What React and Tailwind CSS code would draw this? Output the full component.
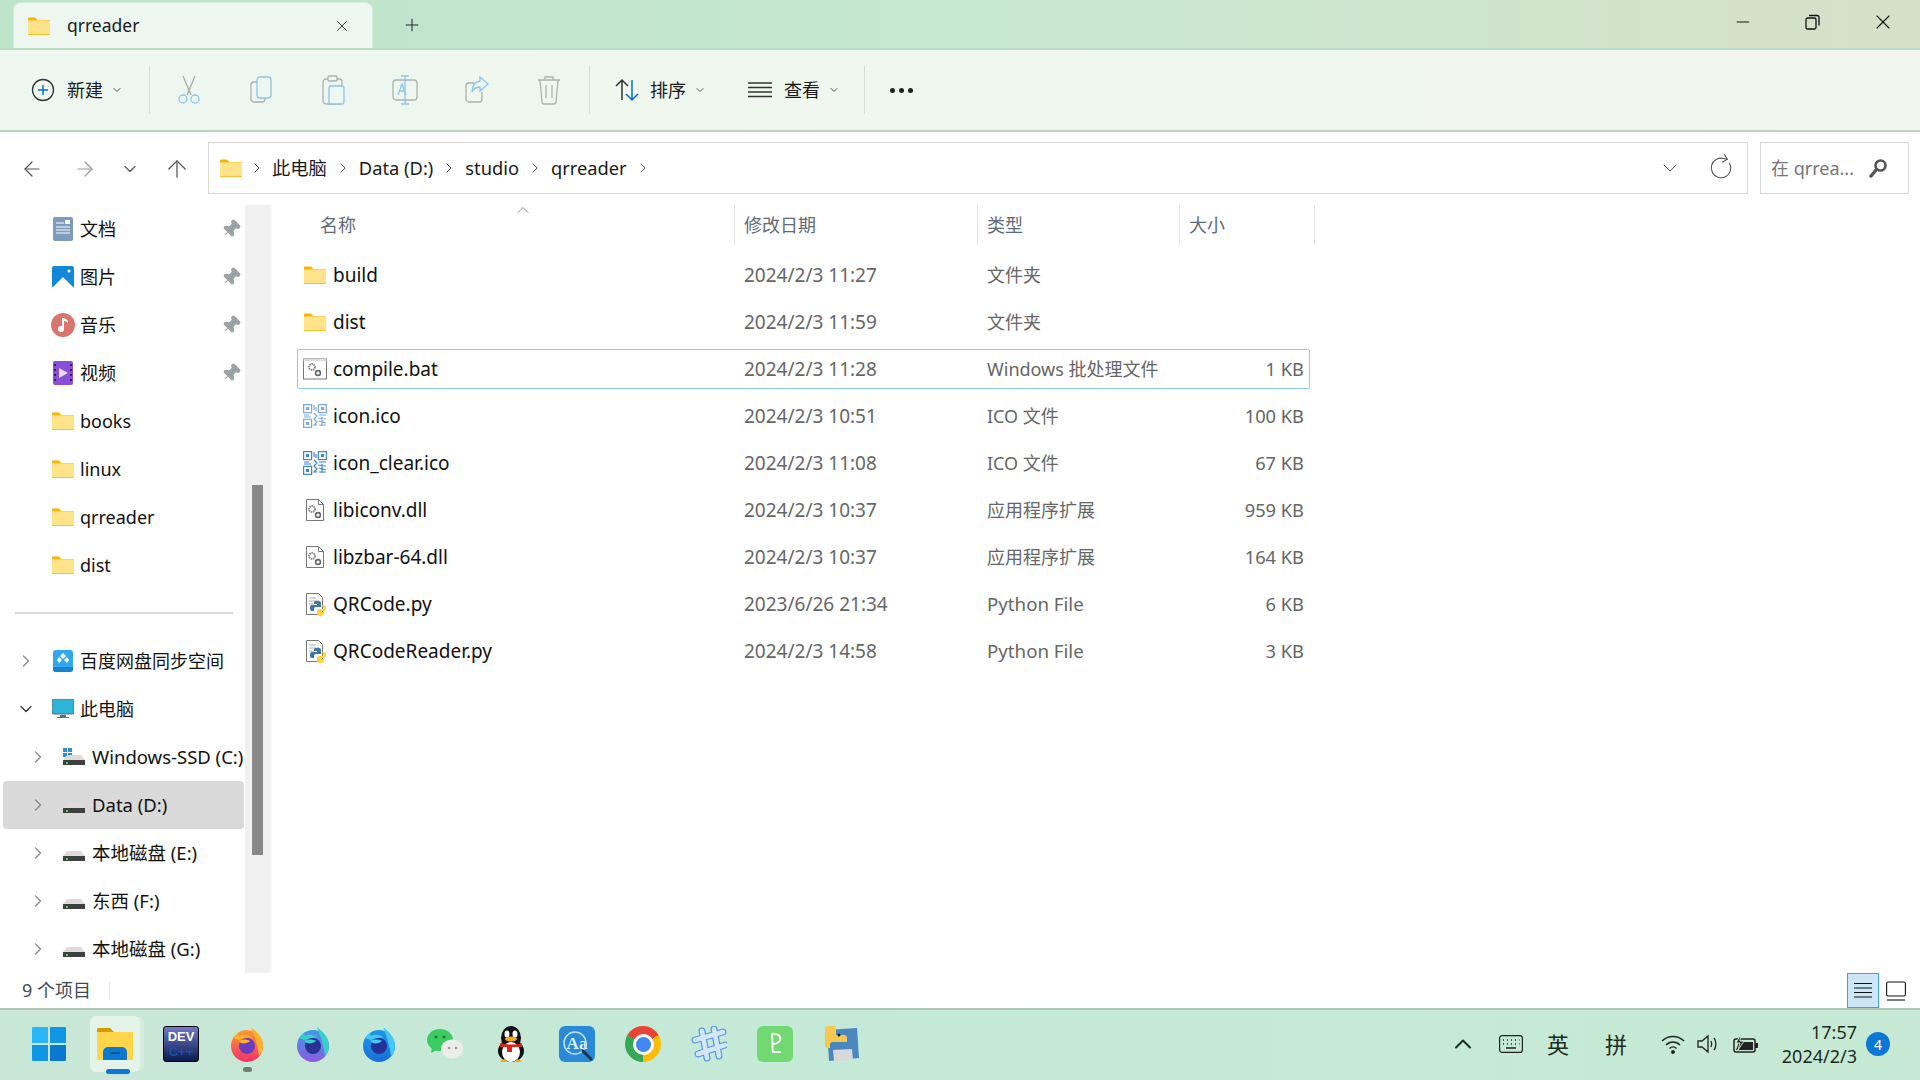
import React from 'react';
import { Plus, X, Minus, ChevronDown, ChevronRight, ChevronUp, ArrowLeft, ArrowRight, ArrowUp, RotateCw, Pin } from 'lucide-react';

const Folder = ({ className = 'w-[22px] h-[18px]' }) => (
  <svg viewBox="0 0 22 18" className={className}>
    <path d="M0 1.5a1 1 0 0 1 1-1h6l2.5 2.5H0z" fill="#f7b500" />
    <path d="M0 3h22v15H0z" fill="#fbc02d" />
    <path d="M0 3.5h22v13.5H0z" fill="#ffe38a" />
  </svg>
);

const Gears = ({ x = 0, y = 0 }) => (
  <g transform={`translate(${x} ${y})`}>
    <circle cx="4" cy="4" r="3" fill="none" stroke="#8e8e8e" strokeWidth="2" strokeDasharray="1.6 .6" />
    <circle cx="10" cy="10" r="2.4" fill="none" stroke="#666" strokeWidth="1.6" />
  </g>
);

const BatIcon = () => (
  <svg viewBox="0 0 24 22" className="w-6 h-[22px]">
    <rect x=".5" y="1" width="23" height="20" fill="#fff" stroke="#777" />
    <path d="M.5 1h23v2H.5z" fill="#ddd" />
    <Gears x="5" y="5" />
  </svg>
);

const DllIcon = () => (
  <svg viewBox="0 0 24 24" className="w-6 h-6">
    <path d="M3.5 1.500h12l5 5v16h-17z" fill="#fff" stroke="#777" />
    <path d="M15.500 1.500v5h5" fill="none" stroke="#777" />
    <Gears x="5" y="7" />
  </svg>
);

const PyBadge = () => (
  <svg viewBox="0 0 24 24" className="w-6 h-6">
    <path d="M3.500 1.500h12l4 4v17h-16z" fill="#fff" stroke="#777" />
    <path d="M6 6h7M6 9h10M6 12h5" stroke="#aaa" />
    <path d="M12 9h4a2 2 0 0 1 2 2v4h-5a2 2 0 0 0-2 2v2H9a2 2 0 0 1-2-2v-2a2 2 0 0 1 2-2h5v-1h-3v-1a2 2 0 0 1 1-2z" fill="#3d75a8" />
    <path d="M19 13h2a2 2 0 0 1 2 2v2a2 2 0 0 1-2 2h-3v1h3v1a3 3 0 0 1-3 3h-2a2 2 0 0 1-2-2v-3a2 2 0 0 1 2-2h4a1 1 0 0 0 1-1z" fill="#ffd43b" />
  </svg>
);

const QrIcon = ({ faded }) => (
  <svg viewBox="0 0 24 24" className="w-6 h-6" fill="none" stroke={faded ? '#7fa9d8' : '#3f86cc'} strokeWidth="1.200">
    <rect x=".6" y=".6" width="8" height="8" />
    <rect x="15.400" y=".6" width="8" height="8" />
    <rect x=".6" y="15.400" width="8" height="8" />
    <path d="M3.500 3.500h2v2h-2zM18.500 3.500h2v2h-2zM3.500 18.500h2v2h-2z" fill={faded ? '#7fa9d8' : '#3f86cc'} />
    <path d="M11 1v5M13 3v4M1 11h5M1 13h7M11 9l3 3-3 3 3 3-3 3h3M16 11h7M15 14l8 1M16 17l7 2M16 21h7M19 13v9" />
  </svg>
);

const ToolCut = () => (
  <svg viewBox="0 0 24 30" className="w-6 h-[30px]" fill="none" strokeWidth="1.300">
    <path d="M6 1l8 19M18 1L10 20" stroke="#a8a8a8" />
    <circle cx="6" cy="24" r="4" stroke="#8cc6ea" />
    <circle cx="18" cy="24" r="4" stroke="#8cc6ea" />
  </svg>
);
const ToolCopy = () => (
  <svg viewBox="0 0 24 30" className="w-6 h-[30px]" fill="none" strokeWidth="1.300">
    <rect x="2" y="7" width="14" height="20" rx="3" stroke="#b0b0b0" />
    <rect x="8" y="2" width="14" height="21" rx="3" fill="#edf7ef" stroke="#8cc6ea" />
  </svg>
);
const ToolPaste = () => (
  <svg viewBox="0 0 24 30" className="w-6 h-[30px]" fill="none" strokeWidth="1.300">
    <rect x="2" y="4" width="19" height="25" rx="3" stroke="#b0b0b0" />
    <rect x="7" y="1" width="9" height="5" rx="1" fill="#edf7ef" stroke="#b0b0b0" />
    <rect x="8" y="11" width="15" height="18" rx="2" fill="#edf7ef" stroke="#8cc6ea" />
  </svg>
);
const ToolRename = () => (
  <svg viewBox="0 0 26 30" className="w-[26px] h-[30px]" fill="none" strokeWidth="1.300">
    <rect x="1" y="5" width="24" height="20" rx="3" stroke="#b0b0b0" />
    <path d="M13 1v28M9 1h8M9 29h8" stroke="#8cc6ea" fill="#edf7ef" />
    <path d="M6 20l4-11 4 11M7.500 16h5" stroke="#8cc6ea" />
  </svg>
);
const ToolShare = () => (
  <svg viewBox="0 0 24 30" className="w-6 h-[30px]" fill="none" strokeWidth="1.300">
    <path d="M17 17v7a3 3 0 0 1-3 3H4a3 3 0 0 1-3-3V11a3 3 0 0 1 3-3h5" stroke="#b0b0b0" />
    <path d="M15 2l8 7-8 7v-4c-4 0-6 1-8 5 0-7 3-10 8-11z" fill="#edf7ef" stroke="#8cc6ea" />
  </svg>
);
const ToolTrash = () => (
  <svg viewBox="0 0 24 30" className="w-6 h-[30px]" fill="none" strokeWidth="1.300" stroke="#b0b0b0">
    <path d="M1 5h22M8 5V2h8v3M3 5l2 22a2 2 0 0 0 2 2h10a2 2 0 0 0 2-2l2-22M9 10v13M15 10v13" />
  </svg>
);

const DriveIcon = ({ win }) => (
  <svg viewBox="0 0 22 18" className="w-[22px] h-[18px]">
    {win && <path d="M0 0h4v4H0zM5 0h4v4H5zM0 5h4v4H0zM5 5h4v4H5z" fill="#2a8fe0" />}
    <path d="M4 7h14l4 5H0z" fill="#dcdcdc" />
    <path d="M0 12h22v5H0z" fill="#3f3f3f" />
    <path d="M3 14h2v2H3z" fill="#3ddc4b" />
  </svg>
);

const NavDocs = () => (
  <svg viewBox="0 0 20 24" className="w-[20px] h-6">
    <rect width="20" height="24" rx="2" fill="#7d9cbd" />
    <path d="M3 6h8M3 10h14M3 13h14M3 16h14" stroke="#fff" strokeWidth="1.200" />
    <path d="M12 3h5v4h-5z" fill="#fff" />
  </svg>
);
const NavPics = () => (
  <svg viewBox="0 0 22 22" className="w-[22px] h-[22px]">
    <rect width="22" height="22" rx="2" fill="#1488d8" />
    <path d="M0 22l11-11 11 11z" fill="#fff" />
    <circle cx="17" cy="5" r="1.500" fill="#fff" />
  </svg>
);
const NavMusic = () => (
  <svg viewBox="0 0 24 24" className="w-6 h-6">
    <circle cx="12" cy="12" r="12" fill="#d9756f" />
    <path d="M12 5v11" stroke="#fff" strokeWidth="2" />
    <circle cx="10" cy="16" r="3" fill="#fff" />
    <path d="M12 5c2 1 4 1 5 3v2c-2-2-3-2-5-2z" fill="#fff" />
  </svg>
);
const NavVideo = () => (
  <svg viewBox="0 0 20 24" className="w-[20px] h-6">
    <rect width="20" height="24" rx="2" fill="#8a4fd6" />
    <path d="M1 3h2v2H1zM1 8h2v2H1zM1 13h2v2H1zM1 18h2v2H1zM17 3h2v2h-2zM17 8h2v2h-2zM17 13h2v2h-2zM17 18h2v2h-2z" fill="#3a1d6e" />
    <path d="M6 7l9 5-9 5z" fill="#e9def9" />
  </svg>
);
const NavBaidu = () => (
  <svg viewBox="0 0 20 22" className="w-[20px] h-[22px]">
    <rect width="20" height="22" rx="3" fill="#2fa8ee" />
    <path d="M10 3l3 3-3 3-3-3zM6 7l3 3-3 3-2-3zM14 7l2 3-2 3-3-3z" fill="#fff" />
    <path d="M0 17h20v2a3 3 0 0 1-3 3H3a3 3 0 0 1-3-3z" fill="#1682d0" />
  </svg>
);
const NavPc = () => (
  <svg viewBox="0 0 22 20" className="w-[22px] h-5">
    <rect width="22" height="15" rx="1.500" fill="#2cb5d9" stroke="#55707d" />
    <path d="M8 16h6v2h3v1H5v-1h3z" fill="#55707d" />
  </svg>
);

const quick = [
  { icon: <NavDocs />, label: '文档', pin: true },
  { icon: <NavPics />, label: '图片', pin: true },
  { icon: <NavMusic />, label: '音乐', pin: true },
  { icon: <NavVideo />, label: '视频', pin: true },
  { icon: <Folder />, label: 'books' },
  { icon: <Folder />, label: 'linux' },
  { icon: <Folder />, label: 'qrreader' },
  { icon: <Folder />, label: 'dist' },
];

const drives = [
  { label: 'Windows-SSD (C:)', win: true },
  { label: 'Data (D:)', active: true },
  { label: '本地磁盘 (E:)' },
  { label: '东西 (F:)' },
  { label: '本地磁盘 (G:)' },
];

const files = [
  { icon: <Folder />, name: 'build', date: '2024/2/3 11:27', type: '文件夹', size: '' },
  { icon: <Folder />, name: 'dist', date: '2024/2/3 11:59', type: '文件夹', size: '' },
  { icon: <BatIcon />, name: 'compile.bat', date: '2024/2/3 11:28', type: 'Windows 批处理文件', size: '1 KB', selected: true },
  { icon: <QrIcon faded />, name: 'icon.ico', date: '2024/2/3 10:51', type: 'ICO 文件', size: '100 KB' },
  { icon: <QrIcon />, name: 'icon_clear.ico', date: '2024/2/3 11:08', type: 'ICO 文件', size: '67 KB' },
  { icon: <DllIcon />, name: 'libiconv.dll', date: '2024/2/3 10:37', type: '应用程序扩展', size: '959 KB' },
  { icon: <DllIcon />, name: 'libzbar-64.dll', date: '2024/2/3 10:37', type: '应用程序扩展', size: '164 KB' },
  { icon: <PyBadge />, name: 'QRCode.py', date: '2023/6/26 21:34', type: 'Python File', size: '6 KB' },
  { icon: <PyBadge />, name: 'QRCodeReader.py', date: '2024/2/3 14:58', type: 'Python File', size: '3 KB' },
];

const Crumb = ({ label }) => (
  <>
    <span className="whitespace-nowrap text-[18.3px]">{label}</span>
    <ChevronRight className="w-4 h-4 mx-[8px] text-[#555]" strokeWidth={1.5} />
  </>
);

const ToolButton = ({ children }) => (
  <div className="w-[72px] flex items-center justify-center">{children}</div>
);

const TitleBar = () => (
  <div className="h-12 shrink-0 flex bg-gradient-to-r from-[#bde3c9] via-[#c6e8d0] to-[#d6e0c9]">
    <div className="ml-[13px] mt-[2px] w-[360px] h-[46px] bg-[#edf7ef] rounded-t-lg border border-b-0 border-[#d4ecdb] flex items-center pl-[14px] pr-[21px] gap-[17px]">
      <Folder />
      <span className="flex-1 text-[17.5px]">qrreader</span>
      <X className="w-[18px] h-[18px] text-[#222]" strokeWidth={1.2} />
    </div>
    <div className="w-[78px] flex items-center justify-center pt-[2px]">
      <Plus className="w-5 h-5 text-[#222]" strokeWidth={1.2} />
    </div>
    <div className="ml-auto flex items-start pt-[10px] pr-[2px]">
      <div className="w-[70px] flex justify-center"><Minus className="w-5 h-6 text-[#111]" strokeWidth={1.2} /></div>
      <div className="w-[70px] flex justify-center h-6 items-center">
        <svg viewBox="0 0 16 16" className="w-4 h-4" fill="none" stroke="#111" strokeWidth="1.300">
          <rect x="1" y="4" width="10" height="11" rx="1.500" />
          <path d="M4 1.500h8a2 2 0 0 1 2 2v8" />
        </svg>
      </div>
      <div className="w-[70px] flex justify-center h-6 items-center"><X className="w-6 h-6 text-[#111]" strokeWidth={1.1} /></div>
    </div>
  </div>
);

const Toolbar = () => (
  <div className="h-[84px] shrink-0 flex items-center bg-gradient-to-r from-[#edf7ef] to-[#f1f6ee] border-t-2 border-b-2 border-t-[#bcdcc5] border-b-[#b9d6bf] pl-[31px]">
    <div className="flex items-center w-[118px] shrink-0">
      <svg viewBox="0 0 24 24" className="w-6 h-6 mr-3" fill="none">
        <circle cx="12" cy="12" r="10.500" stroke="#333" strokeWidth="1.300" />
        <path d="M12 7v10M7 12h10" stroke="#0a6fd0" strokeWidth="1.500" />
      </svg>
      <span>新建</span>
      <ChevronDown className="w-3 h-3 ml-2 text-[#555]" />
    </div>
    <div className="w-px h-12 bg-[#d3ddd5]" />
    <div className="flex pl-[3px]">
      <ToolButton><ToolCut /></ToolButton>
      <ToolButton><ToolCopy /></ToolButton>
      <ToolButton><ToolPaste /></ToolButton>
      <ToolButton><ToolRename /></ToolButton>
      <ToolButton><ToolShare /></ToolButton>
      <ToolButton><ToolTrash /></ToolButton>
    </div>
    <div className="ml-[4px] w-px h-12 bg-[#d3ddd5]" />
    <div className="flex items-center ml-6 w-[134px]">
      <svg viewBox="0 0 26 24" className="w-[26px] h-6 mr-[10px]" fill="none" strokeWidth="1.500">
        <path d="M8 22V2M2 8l6-6 6 6" stroke="#333" />
        <path d="M18 2v20M12 16l6 6 6-6" stroke="#0a6fd0" />
      </svg>
      <span>排序</span>
      <ChevronDown className="w-3 h-3 ml-2 text-[#555]" />
    </div>
    <div className="flex items-center w-[116px]">
      <svg viewBox="0 0 24 20" className="w-6 h-5 mr-3" fill="none" stroke="#333" strokeWidth="1.300">
        <path d="M0 3h24M0 7.500h24M0 12h24M0 16.500h24" />
      </svg>
      <span>查看</span>
      <ChevronDown className="w-3 h-3 ml-2 text-[#555]" />
    </div>
    <div className="w-px h-12 bg-[#d3ddd5]" />
    <div className="ml-[25px] flex gap-1">
      <div className="w-[5px] h-[5px] rounded-full bg-[#222]" />
      <div className="w-[5px] h-[5px] rounded-full bg-[#222]" />
      <div className="w-[5px] h-[5px] rounded-full bg-[#222]" />
    </div>
  </div>
);

const NavBar = () => (
  <div className="h-[73px] shrink-0 flex items-center bg-white">
    <div className="w-[208px] shrink-0 flex items-center text-[#555]">
      <div className="w-[64px] flex justify-center"><ArrowLeft className="w-6 h-6" strokeWidth={1.2} /></div>
      <div className="w-[42px] flex justify-center"><ArrowRight className="w-6 h-6 text-[#9a9a9a]" strokeWidth={1.2} /></div>
      <div className="w-[48px] flex justify-center"><ChevronDown className="w-5 h-5" strokeWidth={1.4} /></div>
      <div className="w-[46px] flex justify-center"><ArrowUp className="w-7 h-7" strokeWidth={1.1} /></div>
    </div>
    <div className="w-[1540px] h-[52px] -mt-[1px] border border-[#d8d8d8] flex items-center pl-[11px] text-[#1a1a1a]">
      <Folder />
      <ChevronRight className="w-4 h-4 mx-[7px] text-[#555]" strokeWidth={1.5} />
      <Crumb label="此电脑" />
      <Crumb label="Data (D:)" />
      <Crumb label="studio" />
      <Crumb label="qrreader" />
      <div className="ml-auto flex items-center text-[#555] pr-[13px]">
        <ChevronDown className="w-6 h-6" strokeWidth={1} />
        <RotateCw className="ml-[26px] w-[26px] h-[26px] -rotate-[30deg]" strokeWidth={1} />
      </div>
    </div>
    <div className="ml-3 w-[149px] h-[52px] -mt-[1px] border border-[#d8d8d8] flex items-center pl-[10px] text-[#777]">
      <span className="flex-1">在 qrrea...</span>
      <svg viewBox="0 0 20 20" className="w-5 h-5 mr-[20px]" fill="none" stroke="#555">
        <circle cx="12.500" cy="7.500" r="5" strokeWidth="2.600" />
        <path d="M8.500 11.500L3 18" strokeWidth="3.400" strokeLinecap="round" />
      </svg>
    </div>
  </div>
);

const Sidebar = () => (
  <div className="w-[272px] shrink-0 flex border-r-2 border-[#f7f7f7] overflow-hidden">
    <div className="w-[245px] shrink-0 text-[#111]">
      {quick.map((item) => (
        <div key={item.label} className="h-12 flex items-center">
          <div className="w-[80px] shrink-0 pl-[51px] pr-[5px] flex justify-center">{item.icon}</div>
          <span className="flex-1">{item.label}</span>
          {item.pin && <Pin className="w-5 h-5 mr-[4px] text-[#9aa2a8] rotate-45" fill="#9aa2a8" strokeWidth={1.4} />}
        </div>
      ))}
      <div className="ml-[15px] w-[218px] h-[2px] mt-[23px] mb-[23px] bg-[#d8d8d8]" />
      <div className="h-12 flex items-center">
        <ChevronRight className="w-5 h-5 ml-[16px] text-[#888]" strokeWidth={1.5} />
        <div className="w-[44px] pl-[9px] flex justify-center"><NavBaidu /></div>
        <span className="whitespace-nowrap">百度网盘同步空间</span>
      </div>
      <div className="h-12 flex items-center">
        <ChevronDown className="w-5 h-5 ml-[16px] text-[#333]" strokeWidth={1.5} />
        <div className="w-[44px] pl-[9px] flex justify-center"><NavPc /></div>
        <span>此电脑</span>
      </div>
      {drives.map((d) => (
        <div key={d.label} className={d.active ? 'h-12 ml-[3px] mr-px rounded flex items-center bg-[#d9d9d9]' : 'h-12 ml-[3px] mr-px flex items-center'}>
          <ChevronRight className="w-5 h-5 ml-[25px] text-[#888]" strokeWidth={1.5} />
          <div className="w-[44px] pl-[8px] flex justify-center"><DriveIcon win={d.win} /></div>
          <span className="whitespace-nowrap text-[18.5px]">{d.label}</span>
        </div>
      ))}
    </div>
    <div className="w-[25px] shrink-0 bg-[#f0f0f0] flex justify-center">
      <div className="w-[11px] h-[370px] mt-[280px] bg-[#888]" />
    </div>
  </div>
);

const HeaderCell = ({ children, className }) => (
  <div className={`h-10 flex items-center border-r border-[#e5e5e5] text-[#5f6b76] ${className}`}>{children}</div>
);

const FileTable = () => (
  <div className="flex-1 pl-[25px] overflow-hidden">
    <div className="flex w-[1018px]">
      <HeaderCell className="relative w-[438px] pl-[23px]">
        名称
        <ChevronUp className="absolute left-[216px] -top-[5px] w-5 h-5 text-[#777]" strokeWidth={1} />
      </HeaderCell>
      <HeaderCell className="w-[243px] pl-[9px]">修改日期</HeaderCell>
      <HeaderCell className="w-[202px] pl-[9px]">类型</HeaderCell>
      <HeaderCell className="w-[135px] pl-[9px]">大小</HeaderCell>
    </div>
    <div className="mt-[10px] flex flex-col gap-[7px] w-[1013px]">
      {files.map((f) => (
        <div
          key={f.name}
          className={f.selected
            ? 'h-10 grid grid-cols-[446px_243px_1fr_auto] items-center border border-[#90c8f5] rounded-[2px] pr-[5px] text-[#666]'
            : 'h-10 grid grid-cols-[446px_243px_1fr_auto] items-center border border-transparent pr-[5px] text-[#666]'}
        >
          <div className="flex items-center pl-[5px] text-[#111]">
            <div className="w-6 mr-[6px] flex justify-center">{f.icon}</div>
            <span className="whitespace-nowrap text-[19px]">{f.name}</span>
          </div>
          <span className="whitespace-nowrap text-[19px]">{f.date}</span>
          <span className={f.type === 'Python File' ? 'whitespace-nowrap text-[18.7px]' : 'whitespace-nowrap'}>{f.type}</span>
          <span className="whitespace-nowrap text-[18.3px]">{f.size}</span>
        </div>
      ))}
    </div>
  </div>
);

const StatusBar = () => (
  <div className="h-[35px] shrink-0 bg-white flex items-center pl-[22px] text-[#3f4a55]">
    <span className="w-[87px]">9 个项目</span>
    <div className="w-px h-[18px] bg-[#e8e8e8]" />
    <div className="ml-auto flex items-center pr-[13px]">
      <div className="w-8 h-[35px] border border-[#3aa0e8] bg-[#cce6f5] flex items-center justify-center">
        <svg viewBox="0 0 20 18" className="w-[20px] h-[18px]" stroke="#111" strokeWidth="1.100">
          <path d="M1 1.500h18M1 6h18M1 10.500h18M1 15h18" />
        </svg>
      </div>
      <div className="ml-[5px] w-[23px] h-[28px] flex items-center justify-center">
        <svg viewBox="0 0 20 20" className="w-[20px] h-5" fill="none" stroke="#111" strokeWidth="1.100">
          <rect x=".6" y="1" width="18.800" height="14" rx="1.500" />
          <path d="M1 19h18" />
        </svg>
      </div>
    </div>
  </div>
);

const Fox = ({ id, a, a2, b, c }) => (
  <svg viewBox="0 0 36 36" className="w-9 h-9">
    <defs>
      <linearGradient id={id} x1="0" y1="0" x2="0" y2="1">
        <stop offset="0" stopColor={a} />
        <stop offset="1" stopColor={a2} />
      </linearGradient>
    </defs>
    <circle cx="18" cy="20" r="16" fill={`url(#${id})`} />
    <path d="M22 1c6 5 12 10 12 19 0 5-2 8-4 10-1-7-3-17-8-29z" fill={b} />
    <path d="M4 12c2-3 4-5 6-6-1 2-1 3 0 4 3-2 9-2 13 2-5-1-9 0-13 2z" fill={b} />
    <circle cx="18" cy="20" r="8" fill={c} />
    <path d="M9 15c4-2 9-2 12 0-2 2-6 3-9 2z" fill={b} />
  </svg>
);

const Dock = ({ children }) => <div className="w-[66px] flex justify-center shrink-0">{children}</div>;

const Taskbar = () => (
  <div className="h-[72px] shrink-0 flex items-center border-t-2 border-[#aec3b6] bg-gradient-to-r from-[#c9e7d6] via-[#c3ead6] to-[#c7e9d3] pl-4 pb-[2px]">
    <Dock>
      <svg viewBox="0 0 36 36" className="w-9 h-9">
        <path d="M1 2a1 1 0 0 1 1-1h15v16H1z" fill="#29b6f6" />
        <path d="M19 1h15a1 1 0 0 1 1 1v15H19z" fill="#1196e3" />
        <path d="M1 19h16v16H2a1 1 0 0 1-1-1z" fill="#1196e3" />
        <path d="M19 19h16v15a1 1 0 0 1-1 1H19z" fill="#0a78cf" />
      </svg>
    </Dock>
    <Dock>
      <div className="relative w-[50px] h-[56px] rounded-md bg-[#e4f3ea] shadow-[5px_0_0_-1px_#d5ecdf] flex items-center justify-center">
        <svg viewBox="0 0 36 32" className="w-9 h-8">
          <path d="M0 1a1 1 0 0 1 1-1h12l4 4H0z" fill="#d69b00" />
          <path d="M0 4h36v28H0z" fill="#ffd54a" />
          <path d="M6 24a5 5 0 0 1 5-5h14a5 5 0 0 1 5 5v8H6z" fill="#0d78d0" />
          <path d="M13 25h10" stroke="#07508f" strokeWidth="1.500" />
        </svg>
        <div className="absolute bottom-[-2px] left-[16px] w-6 h-[5px] rounded-full bg-[#0a78d4]" />
      </div>
    </Dock>
    <Dock>
      <div className="w-9 h-9 rounded-[3px] bg-gradient-to-b from-[#7479c8] to-[#0c1c50] border border-black flex flex-col items-center justify-center font-bold text-[13px] font-['Liberation_Sans',sans-serif]">
        <span className="text-white leading-[15px]">DEV</span>
        <span className="text-[#1b4fa8] leading-[15px]">C++</span>
      </div>
    </Dock>
    <Dock>
      <div className="relative">
        <Fox id="foxA" a="#ff9a2e" a2="#f0306a" b="#ffb02e" c="#6a3cc0" />
        <div className="absolute left-[14px] bottom-[-10px] w-[9px] h-[5px] rounded-full bg-[#6f7f76]" />
      </div>
    </Dock>
    <Dock><Fox id="foxB" a="#3f9ae8" a2="#8a5be0" b="#35d0c8" c="#2b2f96" /></Dock>
    <Dock><Fox id="foxC" a="#1a9ae8" a2="#1a6fd8" b="#45c8f5" c="#27309a" /></Dock>
    <Dock>
      <svg viewBox="0 0 36 30" className="w-9 h-[30px]">
        <ellipse cx="13" cy="11" rx="13" ry="11" fill="#3ccc62" />
        <path d="M5 18l-1 6 6-3z" fill="#3ccc62" />
        <circle cx="9" cy="8" r="1.500" fill="#1b7a38" />
        <circle cx="17" cy="8" r="1.500" fill="#1b7a38" />
        <ellipse cx="25" cy="20" rx="11" ry="9.500" fill="#ececec" />
        <circle cx="22" cy="19" r="1.300" fill="#999" />
        <circle cx="29" cy="19" r="1.300" fill="#999" />
      </svg>
    </Dock>
    <Dock>
      <svg viewBox="0 0 30 38" className="w-[30px] h-[38px]">
        <ellipse cx="15" cy="13" rx="10" ry="12" fill="#111" />
        <ellipse cx="15" cy="26" rx="13" ry="11" fill="#111" />
        <ellipse cx="15" cy="27" rx="9" ry="10" fill="#fff" />
        <ellipse cx="11" cy="9" rx="2.500" ry="3.500" fill="#fff" />
        <ellipse cx="19" cy="9" rx="2.500" ry="3.500" fill="#fff" />
        <ellipse cx="15" cy="14" rx="6" ry="2.500" fill="#f5a623" />
        <path d="M4 18c6 2 16 2 22 0v4H16v5h-5v-5H4z" fill="#e0201c" />
        <path d="M4 36l5-2 3 3H5zM26 36l-5-2-3 3h7z" fill="#f5a623" />
      </svg>
    </Dock>
    <Dock>
      <div className="relative w-9 h-9 rounded-md bg-[#2a8ad8] flex items-center justify-center text-[#dff1ff] font-['Liberation_Serif',serif] text-[17px] font-bold">
        <span>Aa</span>
        <svg viewBox="0 0 36 36" className="absolute inset-0 w-9 h-9" fill="none">
          <circle cx="16" cy="17" r="11" stroke="#bfe0f7" strokeWidth="1.500" />
          <path d="M24 25l8 8" stroke="#17324d" strokeWidth="3" strokeLinecap="round" />
        </svg>
      </div>
    </Dock>
    <Dock>
      <div className="w-9 h-9 rounded-full bg-[conic-gradient(from_300deg,#ea4335_0deg_120deg,#fbbc04_120deg_240deg,#34a853_240deg_360deg)] flex items-center justify-center">
        <div className="w-[15px] h-[15px] rounded-full bg-[#4285f4] border-[3px] border-white box-content" />
      </div>
    </Dock>
    <Dock>
      <svg viewBox="0 0 36 36" className="w-9 h-9" fill="none" stroke="#5a9be0" strokeWidth="7" strokeLinecap="round">
        <path d="M11 5l5 27M23 3l5 27M4 14l28-8M7 28l27-9" />
        <path d="M11 5l5 27M23 3l5 27M4 14l28-8M7 28l27-9" stroke="#d3e6fa" strokeWidth="4.500" />
      </svg>
    </Dock>
    <Dock>
      <div className="w-9 h-9 rounded-md bg-[#72d972] flex items-center justify-center">
        <svg viewBox="0 0 24 24" className="w-6 h-7" fill="none" stroke="#f2fff0" strokeWidth="2">
          <path d="M8 2c7-1 10 2 9 6-1 3-5 4-8 4M9 3c1 6 0 13 1 17h8" />
        </svg>
      </div>
    </Dock>
    <Dock>
      <svg viewBox="0 0 36 36" className="w-9 h-9">
        <path d="M4 4l30-2 2 30-30 3z" fill="#4a86c0" />
        <path d="M2 3a3 3 0 0 1 3-3h5a3 3 0 0 1 3 3v6h8a3 3 0 0 1 3 3v4H10a3 3 0 0 0-3 3v3H4a2 2 0 0 1-2-2z" fill="#f5c94e" />
        <path d="M10 24l19-1 1 11-19 1z" fill="#d8d8d8" />
        <circle cx="16" cy="9" r="1.500" fill="#222" />
      </svg>
    </Dock>
    <div className="ml-auto flex items-center pr-[30px] text-[#1c2a24]">
      <div className="w-12 flex justify-center"><ChevronUp className="w-7 h-7" strokeWidth={1.7} /></div>
      <div className="w-12 flex justify-center">
        <svg viewBox="0 0 24 18" className="w-6 h-[18px]" fill="none" stroke="#222" strokeWidth="1.200">
          <rect x=".6" y=".6" width="22.800" height="16.800" rx="2.500" />
          <path d="M4 5h1M8 5h1M12 5h1M16 5h1M20 5h.5M4 9h1M8 9h1M12 9h1M16 9h1M20 9h.5M7 13h10" strokeWidth="1.500" />
        </svg>
      </div>
      <div className="w-[46px] text-center text-[22px] leading-none">英</div>
      <div className="w-[70px] text-center text-[22px] leading-none">拼</div>
      <div className="w-[44px] flex justify-center">
        <svg viewBox="0 0 24 20" className="w-6 h-5" fill="none" stroke="#222" strokeWidth="1.500">
          <path d="M1 7c6-6 16-6 22 0M5 11c4-4 10-4 14 0M8.500 14.500c2-2 5-2 7 0" />
          <circle cx="12" cy="18" r="1.200" fill="#222" />
        </svg>
      </div>
      <div className="w-[26px] pl-[2px] flex justify-center">
        <svg viewBox="0 0 24 20" className="w-6 h-5 shrink-0" fill="none" stroke="#222" strokeWidth="1.300">
          <path d="M1 7h4l6-5v16l-6-5H1zM14 7c1 2 1 4 0 6M17 4c2.500 3 2.500 9 0 12" />
        </svg>
      </div>
      <div className="w-[50px] flex justify-center">
        <svg viewBox="0 0 26 20" className="w-[26px] h-5">
          <rect x="1" y="5" width="21" height="13" rx="2" fill="none" stroke="#222" strokeWidth="1.500" />
          <path d="M3 16l3-8h14v8z" fill="#222" />
          <path d="M22 9h3v5h-3z" fill="#222" />
          <path d="M8 0L3 9h4l-2 7 6-9H7z" fill="#222" stroke="#c7ead4" />
        </svg>
      </div>
      <div className="w-[86px] text-right leading-[24px] whitespace-nowrap">
        <div>17:57</div>
        <div>2024/2/3</div>
      </div>
      <div className="ml-[9px] w-6 h-6 rounded-full bg-[#0a78d4] text-white text-[14px] flex items-center justify-center">4</div>
    </div>
  </div>
);

export default function App() {
  return (
    <div className="w-[1920px] h-[1080px] flex flex-col overflow-hidden bg-white text-[18px] text-[#1a1a1a] font-['Noto_Sans','Noto_Sans_CJK_SC',sans-serif]">
      <TitleBar />
      <Toolbar />
      <NavBar />
      <div className="flex-1 flex min-h-0">
        <Sidebar />
        <FileTable />
      </div>
      <StatusBar />
      <Taskbar />
    </div>
  );
}
